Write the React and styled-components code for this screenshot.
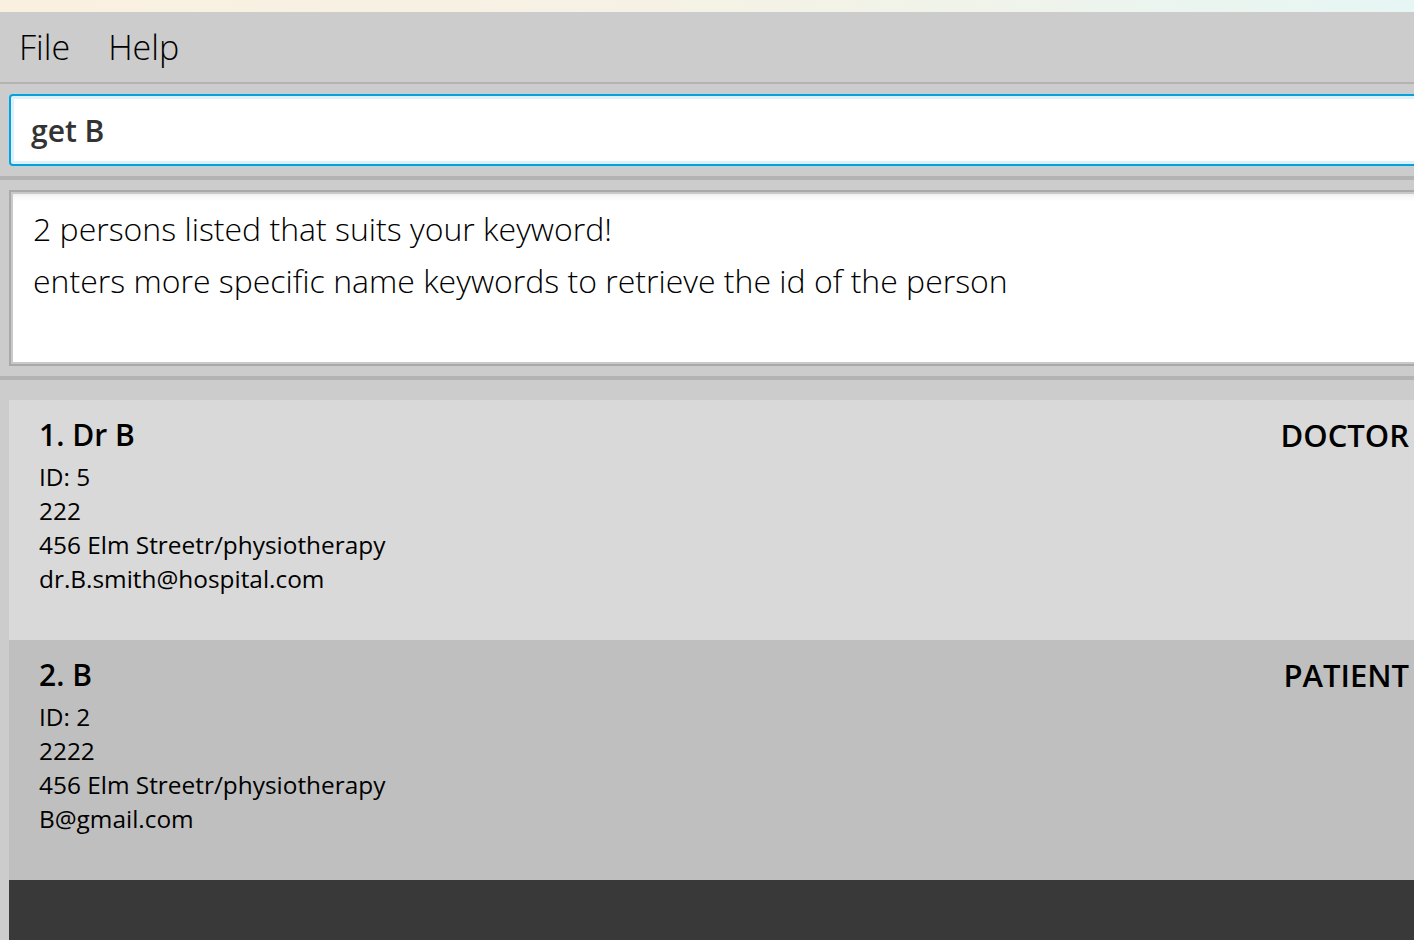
import styled, { createGlobalStyle } from 'styled-components';

const GlobalStyle = createGlobalStyle`
  html, body {
    margin: 0;
    padding: 0;
    background: #cccccc;
  }
  #root {
    width: 1414px;
    height: 940px;
    overflow: hidden;
  }
`;

const Window = styled.div`
  width: 1414px;
  height: 940px;
  display: flex;
  flex-direction: column;
  overflow: hidden;
  background: #cccccc;
  font-family: 'Open Sans', 'Noto Sans', sans-serif;
  color: #000;
`;

const TopStrip = styled.div`
  height: 12px;
  flex: none;
  background: linear-gradient(to right, #faf0e0, #f4f2e6 55%, #e6f6f4);
`;

const MenuBar = styled.div`
  flex: none;
  height: 72px;
  box-sizing: border-box;
  display: flex;
  align-items: center;
  gap: 38px;
  padding-left: 19px;
  border-bottom: 2px solid #b3b3b3;
`;

const MenuItem = styled.span`
  font-size: 34px;
  font-weight: 300;
  line-height: 40px;
`;

const CommandSection = styled.div`
  flex: none;
  padding: 10px 0 10px 9px;
  border-bottom: 4px solid #b3b3b3;
`;

const CommandBox = styled.div`
  width: 1420px;
  height: 72px;
  box-sizing: border-box;
  background: #fff;
  border: 2px solid #0a9fd8;
  border-radius: 4px;
  box-shadow: 0 0 0 1px #b9d3df, inset 0 0 0 3px #dcf1f9;
  display: flex;
  align-items: center;
  padding-left: 20px;
  font-size: 30px;
  font-weight: 600;
  color: #333;
`;

const ResultSection = styled.div`
  flex: none;
  padding: 10px 0 10px 9px;
  border-bottom: 4px solid #b3b3b3;
`;

const ResultBox = styled.div`
  width: 1420px;
  height: 176px;
  box-sizing: border-box;
  background: #fff;
  border: 2px solid #a9a9a9;
  box-shadow: inset 0 0 0 2px #c9c9c9, inset 0 8px 8px -6px rgba(0, 0, 0, 0.12);
  padding: 11px 22px;
  font-size: 32px;
  font-weight: 300;
  line-height: 52px;
`;

const ListSection = styled.div`
  flex: 1;
  padding: 20px 0 0 9px;
  display: flex;
  flex-direction: column;
`;

const Card = styled.div`
  height: 240px;
  flex: none;
  box-sizing: border-box;
  background: ${(p) => (p.$alt ? '#bfbfbf' : '#d9d9d9')};
  padding: 17px 5px 0 30px;
  display: flex;
  justify-content: space-between;
`;

const CardBody = styled.div`
  display: flex;
  flex-direction: column;
`;

const Name = styled.div`
  font-size: 30px;
  font-weight: 600;
  line-height: 36px;
  margin-bottom: 7px;
`;

const Detail = styled.div`
  font-size: 24.4px;
  line-height: 34px;
`;

const Role = styled.div`
  font-size: 31px;
  font-weight: 600;
  line-height: 36px;
`;

const Footer = styled.div`
  flex: 1;
  background: #393939;
`;

const persons = [
  {
    name: '1. Dr B',
    role: 'DOCTOR',
    details: ['ID: 5', '222', '456 Elm Streetr/physiotherapy', 'dr.B.smith@hospital.com'],
  },
  {
    name: '2. B',
    role: 'PATIENT',
    details: ['ID: 2', '2222', '456 Elm Streetr/physiotherapy', 'B@gmail.com'],
  },
];

export default function App() {
  return (
    <Window>
      <GlobalStyle />
      <TopStrip />
      <MenuBar>
        <MenuItem>File</MenuItem>
        <MenuItem>Help</MenuItem>
      </MenuBar>
      <CommandSection>
        <CommandBox>get B</CommandBox>
      </CommandSection>
      <ResultSection>
        <ResultBox>
          2 persons listed that suits your keyword!
          <br />
          enters more specific name keywords to retrieve the id of the person
        </ResultBox>
      </ResultSection>
      <ListSection>
        {persons.map((p, i) => (
          <Card key={p.name} $alt={i % 2 === 1}>
            <CardBody>
              <Name>{p.name}</Name>
              {p.details.map((d) => (
                <Detail key={d}>{d}</Detail>
              ))}
            </CardBody>
            <Role>{p.role}</Role>
          </Card>
        ))}
        <Footer />
      </ListSection>
    </Window>
  );
}
